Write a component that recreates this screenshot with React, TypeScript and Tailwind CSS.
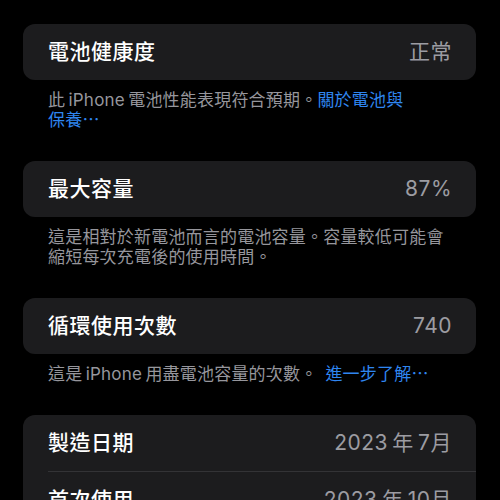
const font = {
  fontFamily: '"Inter", "Noto Sans CJK TC", sans-serif',
};

type RowProps = { label: string; value: string };

const Row = ({ label, value }: RowProps) => (
  <div className="flex h-14 items-center justify-between pl-[25px] pr-6">
    <span className="text-[21px] font-medium text-white tracking-[0.5px]">{label}</span>
    <span className="text-[21px] text-[#9c9ca2] tracking-[0.5px]">{value}</span>
  </div>
);

const Note = ({ children }: { children: React.ReactNode }) => (
  <p className="pl-[25px] pr-8 pt-[10px] pb-[31px] text-[17px] leading-5 text-[#96969c] tracking-[0.2px]">
    {children}
  </p>
);

export default function App() {
  return (
    <div
      className="h-[500px] w-[500px] overflow-hidden bg-black pt-6 pl-[23px] pr-6"
      style={font}
    >
      <div className="rounded-xl bg-[#1c1c1e]">
        <Row label="電池健康度" value="正常" />
      </div>
      <Note>
        此{"\u2009"}iPhone{"\u2009"}電池性能表現符合預期。
        <span className="text-[#2f86f0]">
          關於電池與
          <br />
          保養⋯
        </span>
      </Note>

      <div className="rounded-xl bg-[#1c1c1e]">
        <Row label="最大容量" value="87%" />
      </div>
      <Note>
        這是相對於新電池而言的電池容量。容量較低可能會縮短每次充電後的使用時間。
      </Note>

      <div className="rounded-xl bg-[#1c1c1e]">
        <Row label="循環使用次數" value="740" />
      </div>
      <Note>
        這是{"\u2009"}iPhone{"\u2009"}用盡電池容量的次數。
        <span className="ml-2 text-[#2f86f0]">進一步了解⋯</span>
      </Note>

      <div className="rounded-xl bg-[#1c1c1e]">
        <Row label="製造日期" value={"2023\u2009年\u20097月"} />
        <div className="ml-[25px] h-px bg-[#333336]" />
        <Row label="首次使用" value={"2023\u2009年\u200910月"} />
      </div>
    </div>
  );
}
